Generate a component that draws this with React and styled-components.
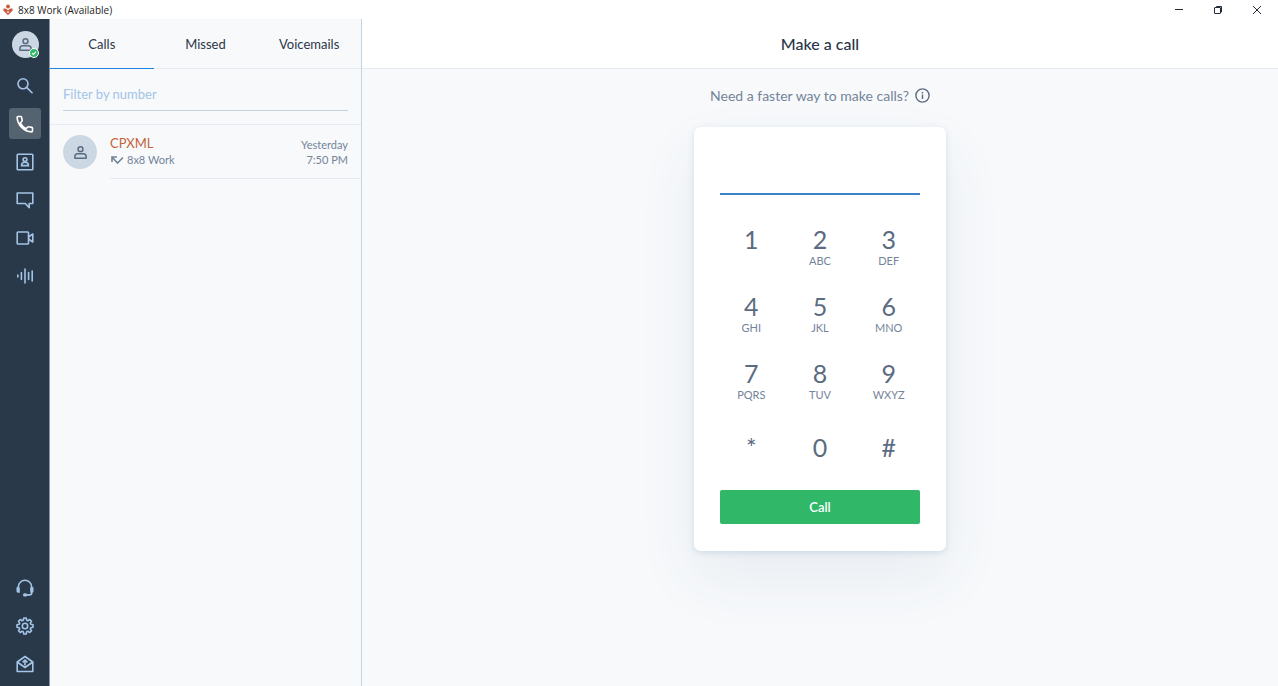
import React, { useState } from 'react';
import styled, { createGlobalStyle, ThemeProvider } from 'styled-components';

const theme = {
  colors: {
    navy: '#2a394a',
    ice: '#a3c4e6',
    page: '#f7f9fb',
    white: '#ffffff',
    line: '#e6ebf3',
    edge: '#c5d2e0',
    blue: '#1a84e0',
    ink: '#2b3648',
    slate: '#5b6b80',
    muted: '#74849a',
    orange: '#c4623c',
    green: '#30b768',
  },
};

const GlobalStyle = createGlobalStyle`
  *, *::before, *::after {
    box-sizing: border-box;
  }
  body {
    margin: 0;
    font-family: Lato, 'Open Sans', sans-serif;
    font-size: 13px;
    color: ${theme.colors.ink};
  }
  button, input {
    font-family: inherit;
    border: none;
    background: none;
    padding: 0;
    margin: 0;
    color: inherit;
  }
  button {
    cursor: pointer;
  }
  h1, p {
    margin: 0;
  }
`;

const Window = styled.div`
  display: flex;
  flex-direction: column;
  min-height: 100vh;
  background: ${props => props.theme.colors.page};
`;

const TitleBar = styled.header`
  display: flex;
  align-items: center;
  height: 19px;
  flex: none;
  padding-left: 3px;
  background: ${props => props.theme.colors.white};
  font-family: 'Open Sans', sans-serif;
  font-size: 10px;
  line-height: 18px;
  color: #1c1c1c;
`;

const AppName = styled.span`
  flex: 1;
  margin-left: 5px;
`;

const WindowButton = styled.button`
  display: flex;
  align-items: center;
  justify-content: center;
  width: 39px;
  height: 19px;
  color: #222b36;
`;

const WindowButtons = styled.div`
  display: flex;
  padding-right: 2px;
`;

const Body = styled.div`
  display: flex;
  flex: 1;
`;

const Sidebar = styled.nav`
  display: flex;
  flex-direction: column;
  align-items: center;
  gap: 7px;
  width: 50px;
  flex: none;
  padding: 12px 0 7px 1px;
  background: ${props => props.theme.colors.navy};
  border-right: 1px solid #8796a8;
`;

const SideButton = styled.button`
  display: flex;
  align-items: center;
  justify-content: center;
  width: 32px;
  height: 31px;
  border-radius: 3px;
  color: ${props => (props.$active ? props.theme.colors.white : props.theme.colors.ice)};
  background: ${props => (props.$active ? '#55626f' : 'transparent')};
`;

const Spacer = styled.div`
  flex: 1;
`;

const Avatar = styled.span`
  position: relative;
  display: flex;
  align-items: center;
  justify-content: center;
  width: ${props => props.$size}px;
  height: ${props => props.$size}px;
  flex: none;
  border-radius: 50%;
  color: ${props => props.theme.colors.slate};
  background: #cbd8e3;
`;

const ProfileButton = styled.button`
  display: flex;
  margin-bottom: 5px;
`;

const StatusBadge = styled.span`
  position: absolute;
  right: 0;
  bottom: 0;
  display: flex;
  align-items: center;
  justify-content: center;
  width: 10px;
  height: 10px;
  border: 1px solid ${props => props.theme.colors.white};
  border-radius: 50%;
  color: ${props => props.theme.colors.white};
  background: ${props => props.theme.colors.green};
`;

const CallList = styled.aside`
  width: 312px;
  flex: none;
  border-right: 1px solid ${props => props.theme.colors.edge};
`;

const Tabs = styled.div`
  display: grid;
  grid-template-columns: repeat(3, 1fr);
`;

const Tab = styled.button`
  height: 50px;
  font-size: 13px;
  border-bottom: ${props =>
    props.$active ? `1px solid ${props.theme.colors.blue}` : `1px solid ${props.theme.colors.line}`};
`;

const FilterBox = styled.div`
  padding: 8px 13px 13px;
  border-bottom: 1px solid ${props => props.theme.colors.line};
`;

const FilterInput = styled.input`
  display: block;
  width: 100%;
  height: 34px;
  font-size: 13px;
  border-bottom: 1px solid ${props => props.theme.colors.edge};
  outline: none;
  &::placeholder {
    color: ${props => props.theme.colors.ice};
    opacity: 1;
  }
`;

const CallRow = styled.article`
  display: flex;
  gap: 13px;
  padding: 10px 0 0 13px;
`;

const CallInfo = styled.div`
  display: flex;
  justify-content: space-between;
  flex: 1;
  height: 44px;
  padding-right: 13px;
  font-size: 11px;
  line-height: 15px;
  color: ${props => props.theme.colors.muted};
  border-bottom: 1px solid ${props => props.theme.colors.line};
`;

const Caller = styled.p`
  font-size: 13px;
  line-height: 17px;
  color: ${props => props.theme.colors.orange};
`;

const CallSource = styled.p`
  display: flex;
  align-items: center;
  gap: 3px;
`;

const CallTime = styled.p`
  padding-top: 2px;
  text-align: right;
`;

const Main = styled.main`
  display: flex;
  flex-direction: column;
  align-items: center;
  flex: 1;
`;

const MainHeader = styled.div`
  display: flex;
  align-items: center;
  justify-content: center;
  align-self: stretch;
  height: 50px;
  background: ${props => props.theme.colors.white};
  border-bottom: 1px solid ${props => props.theme.colors.line};
`;

const Title = styled.h1`
  font-size: 16px;
  font-weight: 500;
`;

const Hint = styled.div`
  display: flex;
  align-items: center;
  gap: 6px;
  height: 20px;
  margin: 16px 0 22px;
  font-size: 14px;
  color: ${props => props.theme.colors.muted};
`;

const InfoButton = styled.button`
  display: flex;
  color: ${props => props.theme.colors.slate};
`;

const Dialer = styled.form`
  display: flex;
  flex-direction: column;
  width: 252px;
  padding: 0 26px 27px;
  border-radius: 7px;
  background: ${props => props.theme.colors.white};
  box-shadow: 0 2px 6px rgba(90, 140, 170, 0.2), 0 26px 60px rgba(70, 95, 130, 0.08);
`;

const NumberInput = styled.input`
  width: 100%;
  height: 68px;
  padding-top: 24px;
  font-size: 20px;
  text-align: center;
  border-bottom: 2px solid #3d82c9;
  outline: none;
`;

const Keypad = styled.div`
  display: grid;
  grid-template-columns: repeat(3, 1fr);
  grid-auto-rows: 67px;
  margin: 17px -3px 10px;
`;

const Key = styled.button`
  display: flex;
  flex-direction: column;
  align-items: center;
  justify-content: center;
`;

const Digit = styled.span`
  font-size: 25px;
  line-height: 30px;
  color: ${props => props.theme.colors.slate};
`;

const Letters = styled.span`
  height: 14px;
  font-size: 11px;
  line-height: 14px;
  color: ${props => props.theme.colors.muted};
`;

const CallButton = styled.button`
  height: 34px;
  font-size: 13px;
  font-weight: 600;
  border-radius: 2px;
  color: ${props => props.theme.colors.white};
  background: ${props => props.theme.colors.green};
`;

const Icon = ({ size = 18, box = 18, width = 1.6, children }) => (
  <svg
    width={size}
    height={size}
    viewBox={`0 0 ${box} ${box}`}
    fill="none"
    stroke="currentColor"
    strokeWidth={width}
    aria-hidden="true"
  >
    {children}
  </svg>
);

const icons = {
  search: (
    <>
      <circle cx="7" cy="6.800" r="5" />
      <path d="M10.600 10.400 16.500 16.300" />
    </>
  ),
  phone: (
    <path
      strokeLinejoin="round"
      d="M2 1.500h2.700c.5 0 .8.300.9.800l.6 3c.1.400 0 .7-.3 1L4.200 8c1.300 2.400 3.200 4.300 5.800 5.800l1.700-1.700c.3-.3.600-.4 1-.3l3 .6c.5.100.8.400.8.900V16c0 .5-.4.900-.9.900C8 16.500 1.500 10 1.100 2.400c0-.5.400-.9.900-.9z"
    />
  ),
  contacts: (
    <>
      <rect x="1.200" y="1.200" width="15.600" height="15.600" rx="0.800" />
      <circle cx="9" cy="6.600" r="1.900" />
      <path d="M5.600 12.600v-.5c0-1.600 1.300-2.800 3.400-2.800s3.400 1.200 3.400 2.800v.5z" />
    </>
  ),
  chat: <path strokeLinejoin="round" d="M1.200 2h15.600v10.500h-3.600v4.300L9.300 12.500H1.200z" />,
  video: (
    <>
      <rect x="1.200" y="3" width="11.300" height="12" rx="0.800" />
      <path strokeLinejoin="round" d="M12.500 8 16.800 5v8l-4.300-3" />
    </>
  ),
  audio: (
    <path strokeLinecap="round" d="M1.800 8v2M5.400 5.500v7M9 2v14M12.600 5.500v7M16.200 4v10" />
  ),
  headset: (
    <>
      <path d="M2.300 9V8a6.700 6.700 0 0 1 13.400 0v6c0 1.200-.8 1.900-2 1.900H10.500" />
      <path fill="currentColor" d="M1.300 9h1.700v4H2a.8.800 0 0 1-.7-.8zM15 9h1.700v3.200a.8.800 0 0 1-.7.8h-1z" />
      <rect x="7.800" y="15" width="2.600" height="1.800" rx="0.800" fill="currentColor" />
    </>
  ),
  settings: (
    <>
      <circle cx="9" cy="9" r="2.700" />
      <path
        strokeLinejoin="round"
        d="M7.800 1h2.400l.5 2.200 1.200.5 1.900-1.200 1.700 1.700-1.200 1.900.5 1.200 2.200.5v2.400l-2.200.5-.5 1.200 1.200 1.900-1.700 1.700-1.900-1.200-1.200.5-.5 2.200H7.800l-.5-2.200-1.200-.5-1.900 1.200-1.700-1.700 1.200-1.900-.5-1.200L1 10.200V7.800l2.200-.5.5-1.200-1.200-1.900 1.700-1.700 1.900 1.200 1.200-.5z"
      />
    </>
  ),
  mail: (
    <>
      <path strokeLinejoin="round" d="M1.200 7 9 1.500 16.800 7v9.500H1.200z" />
      <path strokeLinejoin="round" d="M1.200 7 9 12.500 16.800 7M9 10.500V5.200M6.600 7.300 9 5l2.400 2.300" />
    </>
  ),
};

const PersonIcon = ({ size }) => (
  <Icon size={size} box={16}>
    <circle cx="8" cy="4.400" r="2.600" />
    <path strokeLinejoin="round" d="M2 14v-1.700c0-2 1.500-3 3.200-3h5.600c1.700 0 3.200 1 3.200 3V14z" />
  </Icon>
);

const Logo = () => (
  <svg width="10" height="12" viewBox="0 0 10 12" fill="#c9593b" aria-hidden="true">
    <circle cx="5" cy="2.500" r="1.900" />
    <path d="M.8 4.200 3 4.800 5 6.200l2-1.400 2.200-.6.500 2.300L5 11.300.3 6.500z" />
    <path d="M5 6.800 6.300 8.100 5 9.400 3.700 8.100z" fill="#f6d9cf" />
  </svg>
);

const topItems = [
  { icon: 'search', label: 'Search' },
  { icon: 'phone', label: 'Phone' },
  { icon: 'contacts', label: 'Contacts' },
  { icon: 'chat', label: 'Messages' },
  { icon: 'video', label: 'Meetings' },
  { icon: 'audio', label: 'Recordings' },
];

const bottomItems = [
  { icon: 'headset', label: 'Support' },
  { icon: 'settings', label: 'Settings' },
  { icon: 'mail', label: 'Feedback' },
];

const tabs = ['Calls', 'Missed', 'Voicemails'];

const keys = [
  { digit: '1', letters: '' },
  { digit: '2', letters: 'ABC' },
  { digit: '3', letters: 'DEF' },
  { digit: '4', letters: 'GHI' },
  { digit: '5', letters: 'JKL' },
  { digit: '6', letters: 'MNO' },
  { digit: '7', letters: 'PQRS' },
  { digit: '8', letters: 'TUV' },
  { digit: '9', letters: 'WXYZ' },
  { digit: '*' },
  { digit: '0' },
  { digit: '#' },
];

const App = () => {
  const [page, setPage] = useState('phone');
  const [tab, setTab] = useState('Calls');
  const [filter, setFilter] = useState('');
  const [number, setNumber] = useState('');

  const renderItem = ({ icon, label }) => (
    <SideButton
      key={icon}
      type="button"
      aria-label={label}
      $active={page === icon}
      onClick={() => setPage(icon)}
    >
      <Icon>{icons[icon]}</Icon>
    </SideButton>
  );

  return (
    <ThemeProvider theme={theme}>
      <GlobalStyle />
      <Window>
        <TitleBar>
          <Logo />
          <AppName>8x8 Work (Available)</AppName>
          <WindowButtons>
            <WindowButton type="button" aria-label="Minimize">
              <Icon size={10} box={10} width={1}><path d="M1 4.500h8" /></Icon>
            </WindowButton>
            <WindowButton type="button" aria-label="Restore">
              <Icon size={10} box={10} width={1}>
                <rect x="1.500" y="2.500" width="6" height="6" rx="0.500" />
                <path d="M3.500 2.500v-1h5v5.500h-1" />
              </Icon>
            </WindowButton>
            <WindowButton type="button" aria-label="Close">
              <Icon size={10} box={10} width={1}><path d="M1 1l8 8M9 1 1 9" /></Icon>
            </WindowButton>
          </WindowButtons>
        </TitleBar>
        <Body>
          <Sidebar>
            <ProfileButton type="button" aria-label="Profile">
              <Avatar $size={27}>
                <PersonIcon size={15} />
                <StatusBadge>
                  <Icon size={6} box={6} width={1.200}><path d="M1 3.200 2.500 4.500 5 1.700" /></Icon>
                </StatusBadge>
              </Avatar>
            </ProfileButton>
            {topItems.map(renderItem)}
            <Spacer />
            {bottomItems.map(renderItem)}
          </Sidebar>
          <CallList>
            <Tabs>
              {tabs.map(name => (
                <Tab key={name} type="button" $active={tab === name} onClick={() => setTab(name)}>
                  {name}
                </Tab>
              ))}
            </Tabs>
            <FilterBox>
              <FilterInput
                type="text"
                aria-label="Filter by number"
                placeholder="Filter by number"
                value={filter}
                onChange={e => setFilter(e.target.value)}
              />
            </FilterBox>
            <CallRow>
              <Avatar $size={34}>
                <PersonIcon size={15} />
              </Avatar>
              <CallInfo>
                <div>
                  <Caller>CPXML</Caller>
                  <CallSource>
                    <Icon size={14} box={14}>
                      <path d="M2 9V4h5M2 4l5.500 6L13 4.500" />
                    </Icon>
                    8x8 Work
                  </CallSource>
                </div>
                <CallTime>
                  Yesterday<br />7:50 PM
                </CallTime>
              </CallInfo>
            </CallRow>
          </CallList>
          <Main>
            <MainHeader>
              <Title>Make a call</Title>
            </MainHeader>
            <Hint>
              Need a faster way to make calls?
              <InfoButton type="button" aria-label="More information">
                <Icon size={15} box={15} width={1.400}>
                  <circle cx="7.500" cy="7.500" r="6.600" />
                  <path d="M7.500 6.500V11M7.500 4v1.500" />
                </Icon>
              </InfoButton>
            </Hint>
            <Dialer onSubmit={e => e.preventDefault()}>
              <NumberInput
                type="tel"
                aria-label="Phone number"
                value={number}
                onChange={e => setNumber(e.target.value)}
              />
              <Keypad>
                {keys.map(({ digit, letters }) => (
                  <Key key={digit} type="button" onClick={() => setNumber(number + digit)}>
                    <Digit>{digit}</Digit>
                    {letters !== undefined && <Letters>{letters}</Letters>}
                  </Key>
                ))}
              </Keypad>
              <CallButton type="submit">Call</CallButton>
            </Dialer>
          </Main>
        </Body>
      </Window>
    </ThemeProvider>
  );
};

export default App;
